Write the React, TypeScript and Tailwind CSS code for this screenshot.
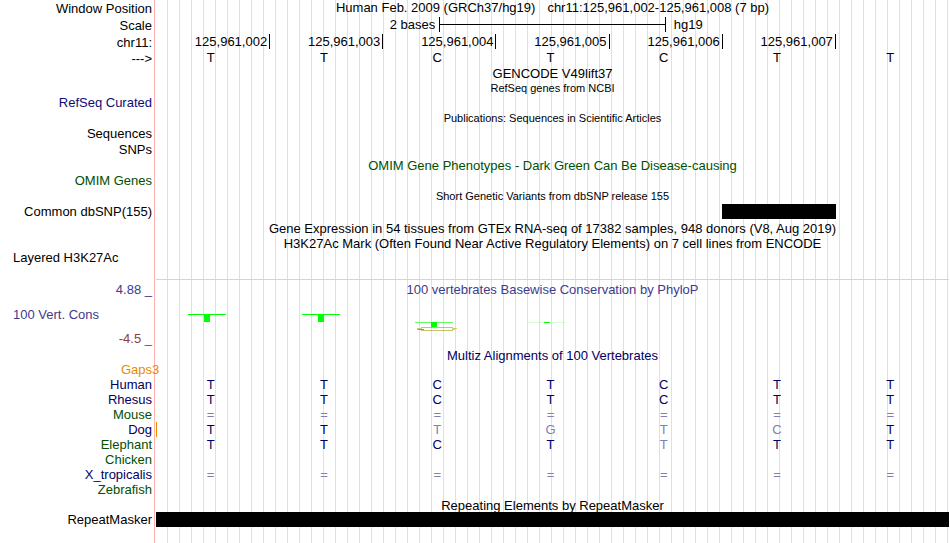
import type { ReactNode } from "react";

type RowProps = {
  label?: ReactNode;
  className?: string;
  labelClass?: string;
  children?: ReactNode;
};

function Row({ label, className = "h-[15px]", labelClass = "text-black", children }: RowProps) {
  return (
    <div className={`flex ${className}`}>
      <div className={`flex w-[156px] shrink-0 items-center justify-end pr-1 ${labelClass}`}>{label}</div>
      <div className="min-w-0 flex-1">{children}</div>
    </div>
  );
}

function Title({ children, className = "" }: { children: ReactNode; className?: string }) {
  return <h2 className={`flex h-full items-center justify-center ${className}`}>{children}</h2>;
}

const positions = ["125,961,002", "125,961,003", "125,961,004", "125,961,005", "125,961,006", "125,961,007"];

function Bases({ sequence, faded = "", color = "text-[#000064]" }: { sequence: string; faded?: string; color?: string }) {
  return (
    <div className="grid h-full grid-cols-7 items-center text-center">
      {sequence.split("").map((base, i) => (
        <span key={i} className={`pr-1 ${base === "=" || faded[i] === "x" ? "text-[#8080b1]" : color}`}>
          {base}
        </span>
      ))}
    </div>
  );
}

const navy = "text-[#000064]";
const green = "text-[#005000]";

const species = [
  { name: "Human", sequence: "TTCTCTT", tone: navy },
  { name: "Rhesus", sequence: "TTCTCTT", tone: navy },
  { name: "Mouse", sequence: "=======", tone: green },
  { name: "Dog", sequence: "TTTGTCT", faded: "--xxxx-", tone: navy, insert: true },
  { name: "Elephant", sequence: "TTCTTTT", faded: "----x--", tone: green },
  { name: "Chicken", sequence: "", tone: green },
  { name: "X_tropicalis", sequence: "=======", tone: navy },
  { name: "Zebrafish", sequence: "", tone: green },
];

function ConservationLogo() {
  return (
    <svg viewBox="0 0 793 34" preserveAspectRatio="none" className="h-[34px] w-full" shapeRendering="crispEdges" aria-hidden="true">
      <g fill="#00ff00">
        <path d="M32 17h38v1h-38zM48 17h6v8h-6z" />
        <path d="M146 17h38v1h-38zM162 17h6v8h-6z" />
        <path d="M275 25h6v5h-6zM388 25h6v1h-6z" />
        <path d="M259 25h38v1h-38z" opacity="0.6" />
        <path d="M372 25h38v1h-38z" opacity="0.15" />
      </g>
      <g fill="#a0a000">
        <path d="M262 32h6v1h-6z" />
        <path d="M265 30h32v1h-32zM265 33h32v1h-32z" opacity="0.6" />
        <path d="M261 31h5v2h-5zM296 31h5v1h-5zM296 32h3v1h-3z" opacity="0.5" />
      </g>
    </svg>
  );
}

export default function App() {
  return (
    <main className="min-h-screen bg-white bg-[linear-gradient(90deg,#fff_154px,#ffb0b0_154px,#ffb0b0_155px,#fff_155px,#fff_156px,transparent_156px),repeating-linear-gradient(90deg,transparent_0px,transparent_11px,#dcdcff_11px,#dcdcff_12px)] pr-px font-['Liberation_Sans',Arial,sans-serif] text-[13px] leading-[15px] whitespace-nowrap">
      <Row label="Window Position" className="h-4">
        <h1 className="flex h-[15px] items-center justify-center gap-3">
          <span>Human Feb. 2009 (GRCh37/hg19)</span>
          <span>chr11:125,961,002-125,961,008 (7 bp)</span>
        </h1>
      </Row>
      <Row label="Scale" className="h-[18px]">
        <div className="grid h-4 grid-cols-14 items-center">
          <span className="col-span-5 pr-1 text-right">2 bases</span>
          <div className="col-span-4 flex h-[15px] items-center border-x border-black">
            <div className="h-px w-full bg-black" />
          </div>
          <span className="col-span-5 pl-2">hg19</span>
        </div>
      </Row>
      <Row label="chr11:" className="h-4">
        <div className="grid h-full grid-cols-7 pl-px">
          {positions.map((p) => (
            <span key={p} className="h-[15px] border-r border-black pr-0.5 text-right leading-4">
              {p}
            </span>
          ))}
        </div>
      </Row>
      <Row label="--->" className="h-4">
        <div className="h-3">
          <Bases sequence="TTCTCTT" color="text-black" />
        </div>
      </Row>

      <Row>
        <Title>GENCODE V49lift37</Title>
      </Row>
      <Row className="h-[14px]">
        <Title className="text-[11px]">RefSeq genes from NCBI</Title>
      </Row>
      <Row label="RefSeq Curated" labelClass="text-[#0c0c78]" />
      <Row className="mt-px h-[15px]">
        <Title className="text-[11px]">Publications: Sequences in Scientific Articles</Title>
      </Row>
      <Row label="Sequences" />
      <Row label="SNPs" className="h-4" />
      <Row className="mt-px h-[15px]">
        <Title className={green}>OMIM Gene Phenotypes - Dark Green Can Be Disease-causing</Title>
      </Row>
      <Row label="OMIM Genes" labelClass={green} className="h-[14px]" />
      <Row className="mt-[2px] h-[15px]">
        <Title className="text-[11px]">Short Genetic Variants from dbSNP release 155</Title>
      </Row>
      <Row label="Common dbSNP(155)">
        <div className="grid h-full grid-cols-7">
          <div className="col-start-6 bg-black" />
        </div>
      </Row>
      <Row className="mt-px h-4">
        <Title>Gene Expression in 54 tissues from GTEx RNA-seq of 17382 samples, 948 donors (V8, Aug 2019)</Title>
      </Row>
      <Row>
        <Title>H3K27Ac Mark (Often Found Near Active Regulatory Elements) on 7 cell lines from ENCODE</Title>
      </Row>
      <Row label="Layered H3K27Ac" labelClass="text-black pl-[13px] justify-start!" className="h-3" />

      <Row className="mt-4 h-[3px]">
        <div className="h-px bg-[#ffcc80]" />
      </Row>
      <Row label="4.88 _" labelClass="text-[#3c3c8c]">
        <Title className="text-[#3c3c8c]">100 vertebrates Basewise Conservation by PhyloP</Title>
      </Row>
      <Row label="100 Vert. Cons" labelClass="text-[#3c3c8c] pl-[13px] justify-start!" className="h-[34px]">
        <ConservationLogo />
      </Row>
      <Row label="-4.5 _" labelClass="text-[#8c3c3c]" />

      <Row className="mt-[2px] h-[14px]">
        <Title className={navy}>Multiz Alignments of 100 Vertebrates</Title>
      </Row>
      <Row
        label={
          <>
            Gaps<span className="w-0">3</span>
          </>
        }
        labelClass="text-[#e68c00]"
      />
      {species.map((s) => (
        <Row key={s.name} label={s.name} labelClass={s.tone}>
          <div className={`h-[15px] ${s.insert ? "shadow-[inset_1px_0_#e68c00]" : ""}`}>
            <Bases sequence={s.sequence} faded={s.faded} />
          </div>
        </Row>
      ))}

      <Row className="mt-px h-[14px]">
        <Title>Repeating Elements by RepeatMasker</Title>
      </Row>
      <Row label="RepeatMasker">
        <div className="h-full bg-black" />
      </Row>
    </main>
  );
}
